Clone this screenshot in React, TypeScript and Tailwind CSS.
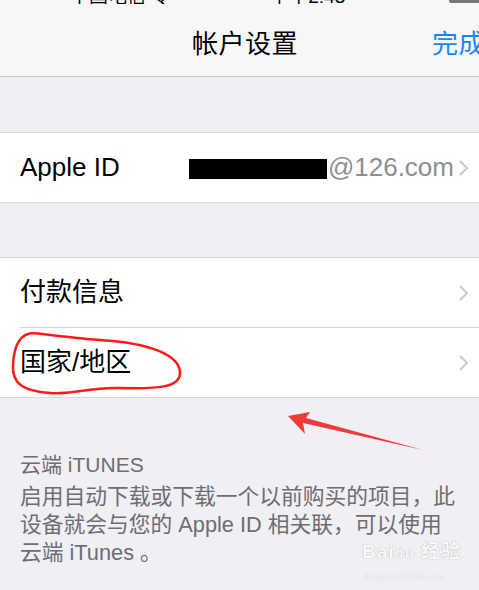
import React from "react";

const Chevron = () => (
  <svg width="11" height="18" viewBox="0 0 11 18" className="shrink-0">
    <path d="M2 2 L9 9 L2 16" fill="none" stroke="#c7c7cc" strokeWidth="2" />
  </svg>
);

export default function App() {
  return (
    <div
      className="relative w-[479px] h-[590px] overflow-hidden bg-[#efeff4]"
      style={{ fontFamily: '"Liberation Sans", "Noto Sans CJK SC", sans-serif' }}
    >
      {/* nav bar */}
      <div className="relative h-[77px] bg-[#f7f7f7] border-b border-[#c8c7cc]">
        <div className="h-[4px] overflow-hidden">
          <div className="flex items-center gap-[40px] pl-[70px] mt-[-17px] text-[19px] text-black whitespace-nowrap">
            <span>中国电信 令</span>
            <span className="ml-[60px]">下午2:43</span>
          </div>
        </div>
        <div className="absolute right-0 top-0 w-[30px] h-[3px] bg-[#777] rounded-bl-[2px]" />
        <div className="flex items-center h-[72px] pt-[8px] pl-[192px]">
          <span className="text-[26px] text-black tracking-[0.5px]">帐户设置</span>
          <span className="ml-auto mr-[-6px] text-[26px] text-[#1a82fb] tracking-[0.5px] whitespace-nowrap">完成</span>
        </div>
      </div>

      <div className="h-[55px]" />

      {/* Apple ID group */}
      <div className="bg-white border-y border-[#d8d8dc]">
        <div className="flex items-center h-[69px] pl-[20px] pr-[10px]">
          <span className="text-[26px] text-black">Apple ID</span>
          <div className="ml-auto flex items-center">
            <div className="w-[138px] h-[20px] bg-black mr-[1px] mt-[2px]" />
            <span className="text-[26px] text-[#8e8e93]">@126.com</span>
            <div className="ml-[4px]">
              <Chevron />
            </div>
          </div>
        </div>
      </div>

      <div className="h-[54px]" />

      {/* Payment group */}
      <div className="bg-white border-y border-[#d8d8dc]">
        <div className="flex items-center h-[69px] pl-[20px] pr-[10px]">
          <span className="text-[26px] text-black">付款信息</span>
          <div className="ml-auto">
            <Chevron />
          </div>
        </div>
        <div className="ml-[20px] h-px bg-[#d8d8dc]" />
        <div className="flex items-center h-[69px] pl-[20px] pr-[10px]">
          <span className="text-[26px] text-black">国家/地区</span>
          <div className="ml-auto">
            <Chevron />
          </div>
        </div>
      </div>

      {/* footer */}
      <div className="pl-[20px] pr-[10px] pt-[53px] text-[#6d6d72]">
        <div className="text-[21px] leading-[28px]">云端 iTUNES</div>
        <div className="mt-[4px] text-[21.75px] leading-[28px] whitespace-nowrap">
          启用自动下载或下载一个以前购买的项目，此
          <br />
          设备就会与您的 Apple ID 相关联，可以使用
          <br />
          云端 iTunes 。
        </div>
      </div>

      {/* red ellipse annotation */}
      <svg className="absolute left-0 top-[325px]" width="200" height="80" viewBox="0 0 200 80">
        <path
          d="M34 8 C 20 8, 14 20, 13 40 C 12 58, 22 66, 50 68 C 70 70, 90 62, 120 63 C 160 64, 180 62, 180 48 C 180 30, 150 18, 100 15 C 70 13, 50 10, 34 8"
          fill="none"
          stroke="#ff1a1a"
          strokeWidth="2.5"
        />
      </svg>

      {/* red arrow */}
      <svg className="absolute left-[285px] top-[410px]" width="145" height="45" viewBox="0 0 145 45">
        <polygon points="3,6 25,2 21,8 138,40 18,13 20,24" fill="#f03a3a" />
      </svg>

      {/* watermark */}
      <div
        className="absolute left-[362px] top-[538px] text-white/90 text-[19px] font-bold tracking-[1px] whitespace-nowrap"
        style={{ textShadow: "0 0 1px #bbb, 0 0 1px #bbb" }}
      >
        Bai<span className="text-[15px]">du</span> 经验
      </div>
      <div
        className="absolute left-[364px] top-[568px] text-white/90 text-[11px] whitespace-nowrap"
        style={{ textShadow: "0 0 1px #bbb", fontFamily: '"Liberation Serif", serif' }}
      >
        jingyan.baidu.com
      </div>
    </div>
  );
}
